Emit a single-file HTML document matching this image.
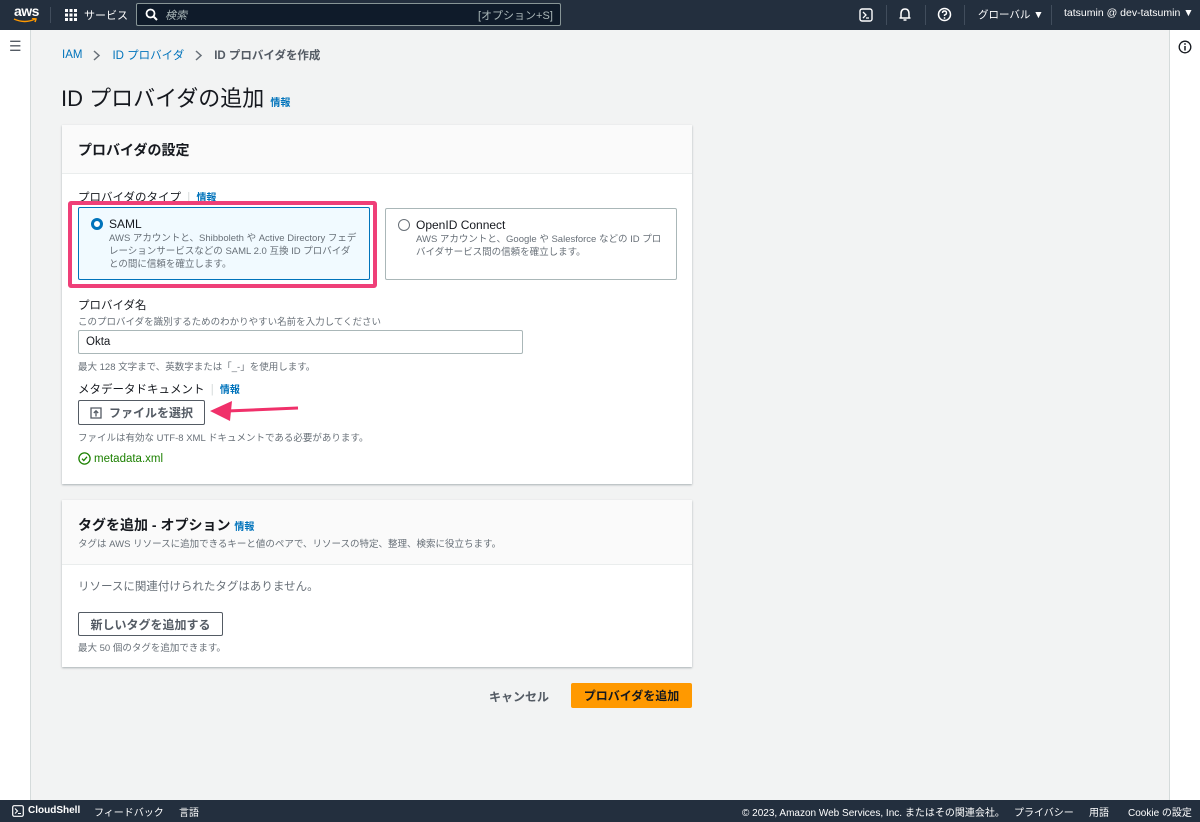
<!DOCTYPE html>
<html><head><meta charset="utf-8"><style>
*{box-sizing:border-box;margin:0;padding:0}
body{width:1200px;height:822px;overflow:hidden;background:#f2f3f3;font-family:"Liberation Sans","Noto Sans CJK JP",sans-serif;color:#16191f;position:relative;font-size:12px}
.abs{position:absolute}
.nav{left:0;top:0;width:1200px;height:30px;background:#232f3e;color:#fff}
.foot{left:0;top:800px;width:1200px;height:22px;background:#232f3e;color:#fff;font-size:10px}
.side{top:30px;height:770px;width:31px;background:#fff}
.card{background:#fff;box-shadow:0 1px 2px rgba(0,28,36,.3);left:62px;width:630px}
.hd{background:#fafafa;border-bottom:1px solid #eaeded;left:0;top:0;width:630px}
.blue{color:#0073bb}
.g{color:#687078}
.btn{border:1px solid #545b64;background:#fff;font-weight:bold;color:#545b64;font-size:12px;display:flex;align-items:center;justify-content:center;border-radius:2px}
</style></head><body>
<div class="abs nav">
 <div class="abs" style="left:14px;top:3px;font-weight:bold;font-size:14px;letter-spacing:-.5px">aws</div>
 <svg class="abs" style="left:13px;top:18px" width="26" height="6"><path d="M1 1 Q12 6 22 1 M19 0 L23 1 L22 4" stroke="#f90" stroke-width="1.5" fill="none"/></svg>
 <div class="abs" style="left:50px;top:7px;width:1px;height:16px;background:#414d5c"></div>
 <svg class="abs" style="left:65px;top:9px" width="12" height="12" fill="#fff"><rect x="0" y="0" width="3" height="3"/><rect x="4.5" y="0" width="3" height="3"/><rect x="9" y="0" width="3" height="3"/><rect x="0" y="4.5" width="3" height="3"/><rect x="4.5" y="4.5" width="3" height="3"/><rect x="9" y="4.5" width="3" height="3"/><rect x="0" y="9" width="3" height="3"/><rect x="4.5" y="9" width="3" height="3"/><rect x="9" y="9" width="3" height="3"/></svg>
 <div class="abs" style="left:84px;top:7px;font-size:11px">サービス</div>
 <div class="abs" style="left:136px;top:3px;width:425px;height:23px;border:1px solid #879596;background:#0f1b2a;border-radius:2px"></div>
 <svg class="abs" style="left:145px;top:8px" width="13" height="13"><circle cx="5.5" cy="5.5" r="4" stroke="#fff" stroke-width="1.8" fill="none"/><path d="M8.5 8.5 L12 12" stroke="#fff" stroke-width="2"/></svg>
 <div class="abs" style="left:165px;top:7px;font-size:11px;color:#aab7b8;font-style:italic">検索</div>
 <div class="abs" style="left:478px;top:7px;font-size:11px;color:#aab7b8">[オプション+S]</div>
 <svg class="abs" style="left:859px;top:8px" width="14" height="14"><rect x="1" y="1" width="12" height="12" rx="2" stroke="#fff" stroke-width="1.4" fill="none"/><path d="M4 4 L7 7 L4 10 M7 10 H10" stroke="#fff" stroke-width="1.3" fill="none"/></svg>
 <div class="abs" style="left:886px;top:5px;width:1px;height:20px;background:#414d5c"></div>
 <svg class="abs" style="left:898px;top:7px" width="14" height="15"><path d="M3 11 L3 7 Q3 2 7 2 Q11 2 11 7 L11 11 Z M1.5 11 H12.5 M5.5 13 H8.5" stroke="#fff" stroke-width="1.5" fill="none"/></svg>
 <div class="abs" style="left:925px;top:5px;width:1px;height:20px;background:#414d5c"></div>
 <svg class="abs" style="left:937px;top:7px" width="15" height="15"><circle cx="7.5" cy="7.5" r="6" stroke="#fff" stroke-width="1.5" fill="none"/><path d="M5.5 6 Q5.5 4 7.5 4 Q9.5 4 9.5 6 Q9.5 7.5 7.5 8 V9" stroke="#fff" stroke-width="1.4" fill="none"/><circle cx="7.5" cy="11" r=".9" fill="#fff"/></svg>
 <div class="abs" style="left:964px;top:5px;width:1px;height:20px;background:#414d5c"></div>
 <div class="abs" style="left:978px;top:7px;font-size:10.5px">グローバル ▼</div>
 <div class="abs" style="left:1051px;top:5px;width:1px;height:20px;background:#414d5c"></div>
 <div class="abs" style="left:1064px;top:7px;font-size:10.5px">tatsumin @ dev-tatsumin ▼</div>
</div>
<div class="abs side" style="left:0;border-right:1px solid #d5dbdb"></div>
<div class="abs" style="left:9px;top:38px;font-size:14px;color:#545b64">☰</div>
<div class="abs side" style="left:1169px;border-left:1px solid #d5dbdb"></div>
<svg class="abs" style="left:1178px;top:40px" width="14" height="14"><circle cx="7" cy="7" r="5.8" stroke="#16191f" stroke-width="1.3" fill="none"/><path d="M7 6 V10.5" stroke="#16191f" stroke-width="1.5"/><circle cx="7" cy="4" r=".9" fill="#16191f"/></svg>

<div class="abs" style="left:62px;top:47px;font-size:11.5px;display:flex;align-items:center"><span class="blue">IAM</span><svg width="30" height="14"><path d="M12 3 L17 7.5 L12 12" stroke="#687078" stroke-width="1.5" fill="none"/></svg><span class="blue">ID プロバイダ</span><svg width="30" height="14"><path d="M12 3 L17 7.5 L12 12" stroke="#687078" stroke-width="1.5" fill="none"/></svg><span style="color:#545b64;font-weight:bold">ID プロバイダを作成</span></div>
<div class="abs" style="left:61px;top:81px;font-size:22px">ID プロバイダの追加 <span class="blue" style="font-size:10px;font-weight:bold">情報</span></div>

<div class="abs card" style="top:125px;height:359px">
 <div class="abs hd" style="height:49px"><div class="abs" style="left:16px;top:15px;font-size:14px;font-weight:bold">プロバイダの設定</div></div>
 <div class="abs" style="left:16px;top:64px;font-size:11.5px">プロバイダのタイプ <span style="color:#d5dbdb;margin:0 3px">|</span> <span class="blue" style="font-size:10px;font-weight:bold">情報</span></div>
 <div class="abs" style="left:6px;top:76px;width:309px;height:87px;border:4px solid #ef3f78;border-radius:3px"></div>
 <div class="abs" style="left:16px;top:82px;width:292px;height:73px;background:#f1faff;border:1px solid #0073bb;border-radius:2px">
  <div class="abs" style="left:12px;top:10px;width:12px;height:12px;border-radius:50%;border:3.5px solid #0073bb;background:#fff"></div>
  <div class="abs" style="left:30px;top:9px;font-size:12px">SAML</div>
  <div class="abs g" style="left:30px;top:24px;font-size:9.5px;line-height:13px;width:250px">AWS アカウントと、Shibboleth や Active Directory フェデレーションサービスなどの SAML 2.0 互換 ID プロバイダとの間に信頼を確立します。</div>
 </div>
 <div class="abs" style="left:323px;top:83px;width:292px;height:72px;border:1px solid #aab7b8;border-radius:2px">
  <div class="abs" style="left:12px;top:10px;width:12px;height:12px;border-radius:50%;border:1px solid #687078"></div>
  <div class="abs" style="left:30px;top:9px;font-size:12px">OpenID Connect</div>
  <div class="abs g" style="left:30px;top:24px;font-size:9.5px;line-height:13px;width:250px">AWS アカウントと、Google や Salesforce などの ID プロバイダサービス間の信頼を確立します。</div>
 </div>
 <div class="abs" style="left:16px;top:172px;font-size:11.5px">プロバイダ名</div>
 <div class="abs g" style="left:16px;top:189px;font-size:9.5px">このプロバイダを識別するためのわかりやすい名前を入力してください</div>
 <div class="abs" style="left:16px;top:205px;width:445px;height:24px;border:1px solid #aab7b8;border-radius:2px;padding:5px 7px;font-size:11.5px">Okta</div>
 <div class="abs g" style="left:16px;top:234px;font-size:9.5px">最大 128 文字まで、英数字または「_-」を使用します。</div>
 <div class="abs" style="left:16px;top:256px;font-size:11.5px">メタデータドキュメント <span style="color:#d5dbdb;margin:0 3px">|</span> <span class="blue" style="font-size:10px;font-weight:bold">情報</span></div>
 <div class="abs btn" style="left:16px;top:275px;width:127px;height:25px"><svg width="12" height="12" style="margin-right:7px"><path d="M1 1 H11 V11 H1 Z M6 9.5 V4 M3.8 6 L6 3.8 L8.2 6" stroke="#545b64" stroke-width="1.3" fill="none"/></svg>ファイルを選択</div>
 <div class="abs g" style="left:16px;top:305px;font-size:9.5px">ファイルは有効な UTF-8 XML ドキュメントである必要があります。</div>
 <div class="abs" style="left:16px;top:327px;font-size:11.5px;color:#1d8102;display:flex;align-items:center"><svg width="13" height="13" style="margin-right:3px"><circle cx="6.5" cy="6.5" r="5.6" stroke="#1d8102" stroke-width="1.3" fill="none"/><path d="M4 6.7 L5.8 8.5 L9 4.8" stroke="#1d8102" stroke-width="1.3" fill="none"/></svg>metadata.xml</div>
</div>
<svg class="abs" style="left:205px;top:398px" width="100" height="28"><path d="M93 10 L22 13" stroke="#f0306a" stroke-width="3" fill="none"/><path d="M5 13 L27 3 L25 23 Z" fill="#f0306a"/></svg>

<div class="abs card" style="top:500px;height:167px">
 <div class="abs hd" style="height:65px">
  <div class="abs" style="left:16px;top:15px;font-size:14px;font-weight:bold">タグを追加 - オプション <span class="blue" style="font-size:10px">情報</span></div>
  <div class="abs g" style="left:16px;top:36px;font-size:9.5px">タグは AWS リソースに追加できるキーと値のペアで、リソースの特定、整理、検索に役立ちます。</div>
 </div>
 <div class="abs g" style="left:16px;top:78px;font-size:11.5px">リソースに関連付けられたタグはありません。</div>
 <div class="abs btn" style="left:16px;top:112px;width:145px;height:24px">新しいタグを追加する</div>
 <div class="abs g" style="left:16px;top:140px;font-size:9.5px">最大 50 個のタグを追加できます。</div>
</div>
<div class="abs" style="left:489px;top:688px;font-size:12px;font-weight:bold;color:#545b64">キャンセル</div>
<div class="abs" style="left:571px;top:683px;width:121px;height:25px;background:#ff9900;color:#16191f;font-weight:bold;font-size:12px;display:flex;align-items:center;justify-content:center;border-radius:2px">プロバイダを追加</div>

<div class="abs foot">
 <svg class="abs" style="left:12px;top:5px" width="12" height="12"><rect x=".7" y=".7" width="10.6" height="10.6" rx="1.5" stroke="#fff" stroke-width="1.2" fill="none"/><path d="M3 3.5 L5.5 6 L3 8.5 M6 8.5 H9" stroke="#fff" stroke-width="1.1" fill="none"/></svg>
 <div class="abs" style="left:28px;top:5px;font-weight:bold">CloudShell</div>
 <div class="abs" style="left:94px;top:4px">フィードバック</div>
 <div class="abs" style="left:179px;top:4px">言語</div>
 <div class="abs" style="left:742px;top:4px">© 2023, Amazon Web Services, Inc. またはその関連会社。</div>
 <div class="abs" style="left:1014px;top:4px">プライバシー</div>
 <div class="abs" style="left:1089px;top:4px">用語</div>
 <div class="abs" style="left:1128px;top:4px">Cookie の設定</div>
</div>
</body></html>
